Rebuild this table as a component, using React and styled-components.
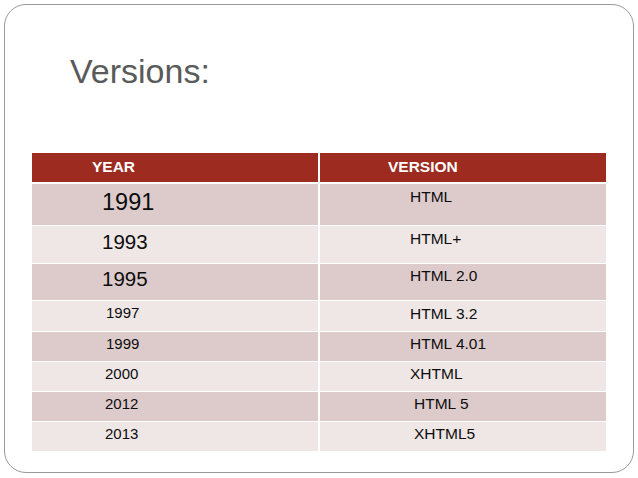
import React from "react";
import styled, { createGlobalStyle } from "styled-components";

const Global = createGlobalStyle`
  html, body { margin: 0; padding: 0; background: #ffffff; }
  body { font-family: "Liberation Sans", Arial, sans-serif; }
`;

const Frame = styled.div`
  box-sizing: border-box;
  margin: 4px;
  width: 630px;
  height: 469px;
  border: 1px solid #9a9a9a;
  border-radius: 22px;
  background: #ffffff;
  padding: 47px 0 0 27px;
`;

const Title = styled.h1`
  margin: 0 0 62px 38px;
  font-family: "Liberation Sans", Arial, sans-serif;
  font-weight: 400;
  font-size: 34px;
  line-height: 39px;
  color: #5a5a5a;
`;

const Table = styled.div`
  display: flex;
  flex-direction: column;
  gap: 1px;
  width: 574px;
`;

const rowBg = {
  header: "#9d2b20",
  dark: "#ddcbcc",
  light: "#efe7e6",
};

const Row = styled.div`
  display: grid;
  grid-template-columns: 286px 286px;
  column-gap: 2px;
  height: ${(p) => p.$h}px;
  margin-bottom: ${(p) => (p.$variant === "header" ? 1 : 0)}px;
`;

const Cell = styled.div`
  box-sizing: border-box;
  background: ${(p) => rowBg[p.$variant]};
  color: ${(p) => (p.$variant === "header" ? "#ffffff" : "#0d0d0d")};
  font-weight: ${(p) => (p.$variant === "header" ? 700 : 400)};
  font-size: ${(p) => p.$size}px;
  line-height: 1.15;
  padding-top: ${(p) => p.$top}px;
  padding-left: ${(p) => p.$indent}px;
  white-space: nowrap;
`;

const rows = [
  { year: "1991", ver: "HTML", h: 41, ys: 23.5, vs: 15.5, yi: 70, vi: 90, yt: 5, vt: 4 },
  { year: "1993", ver: "HTML+", h: 37, ys: 20.5, vs: 15.5, yi: 70, vi: 90, yt: 4, vt: 4 },
  { year: "1995", ver: "HTML 2.0", h: 36, ys: 20.5, vs: 15.5, yi: 70, vi: 90, yt: 3, vt: 3 },
  { year: "1997", ver: "HTML 3.2", h: 30, ys: 15, vs: 15.5, yi: 74, vi: 90, yt: 3, vt: 4 },
  { year: "1999", ver: "HTML 4.01", h: 29, ys: 15, vs: 15.5, yi: 74, vi: 90, yt: 3, vt: 3 },
  { year: "2000", ver: "XHTML", h: 29, ys: 15, vs: 15.5, yi: 73, vi: 90, yt: 3, vt: 3 },
  { year: "2012", ver: "HTML 5", h: 29, ys: 15, vs: 15.5, yi: 73, vi: 94, yt: 3, vt: 3 },
  { year: "2013", ver: "XHTML5", h: 29, ys: 15, vs: 15.5, yi: 73, vi: 94, yt: 3, vt: 3 },
];

export default function App() {
  return (
    <>
      <Global />
      <Frame>
        <Title>Versions:</Title>
        <Table>
          <Row $h={29} $variant="header">
            <Cell $variant="header" $size={15.5} $top={5} $indent={60}>
              YEAR
            </Cell>
            <Cell $variant="header" $size={15.5} $top={5} $indent={68}>
              VERSION
            </Cell>
          </Row>
          {rows.map((r, i) => {
            const v = i % 2 === 0 ? "dark" : "light";
            return (
              <Row key={r.year} $h={r.h} $variant={v}>
                <Cell $variant={v} $size={r.ys} $top={r.yt} $indent={r.yi}>
                  {r.year}
                </Cell>
                <Cell $variant={v} $size={r.vs} $top={r.vt} $indent={r.vi}>
                  {r.ver}
                </Cell>
              </Row>
            );
          })}
        </Table>
      </Frame>
    </>
  );
}
